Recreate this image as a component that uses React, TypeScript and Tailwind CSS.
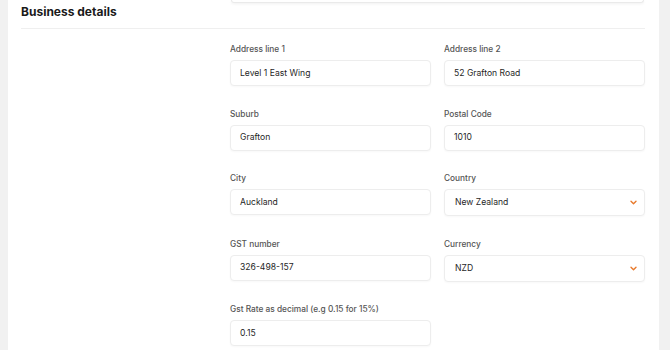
interface FieldProps {
  label: string;
  value: string;
  select?: boolean;
}

// Small orange chevron
function Chevron() {
  return (
    <svg width="7" height="5" viewBox="0 0 7 5" fill="none" className="text-[#e8792b]">
      <path d="M1 1.2L3.5 3.7L6 1.2" stroke="currentColor" strokeWidth="1.4" strokeLinecap="round" strokeLinejoin="round" />
    </svg>
  );
}

// Form field
function Field({ label, value, select }: FieldProps) {
  return (
    <div className="flex flex-col">
      <label className="text-[8.3px] leading-3 text-[#555] font-medium mb-[5px] whitespace-nowrap">
        {label}
      </label>
      {select ? (
        <div className="h-[27px] border border-[#ededed] rounded-[4px] bg-white shadow-[0_1px_2px_rgba(0,0,0,0.03)] flex items-center justify-between pl-[10px] pr-[7px]">
          <span className="text-[8.6px] text-[#1f1f1f]">{value}</span>
          <Chevron />
        </div>
      ) : (
        <div className="h-[26px] border border-[#ededed] rounded-[4px] bg-white shadow-[0_1px_2px_rgba(0,0,0,0.03)] flex items-center px-[9px]">
          <span className="text-[8.6px] text-[#1f1f1f]">{value}</span>
        </div>
      )}
    </div>
  );
}

export default function App() {
  return (
    <div
      className="w-[670px] h-[350px] bg-[#f1f1f1] pl-2 pr-[11px] overflow-hidden"
      style={{ fontFamily: "Inter, 'Noto Sans', sans-serif" }}
    >
      <div className="h-full bg-white pl-[13px] pr-[14px]">
        {/* Card above, cut off */}
        <div className="ml-[210px] mr-px h-[3px] border border-t-0 border-[#eaeaea] rounded-b-md shadow-[0_1px_3px_rgba(0,0,0,0.06)]" />

        {/* Heading */}
        <h2 className="text-[12px] font-bold text-[#1a1a1a] leading-4 mt-[1px] pb-[8px]">
          Business details
        </h2>
        <div className="border-b border-[#efefef]" />

        {/* Grid */}
        <div className="grid grid-cols-[196px_201px_201px] gap-x-[13px] gap-y-[21.5px] pt-[14px]">
          <div className="row-span-5" />
          <Field label="Address line 1" value="Level 1 East Wing" />
          <Field label="Address line 2" value="52 Grafton Road" />
          <Field label="Suburb" value="Grafton" />
          <Field label="Postal Code" value="1010" />
          <Field label="City" value="Auckland" />
          <Field label="Country" value="New Zealand" select />
          <Field label="GST number" value="326-498-157" />
          <Field label="Currency" value="NZD" select />
          <Field label="Gst Rate as decimal (e.g 0.15 for 15%)" value="0.15" />
        </div>
      </div>
    </div>
  );
}
